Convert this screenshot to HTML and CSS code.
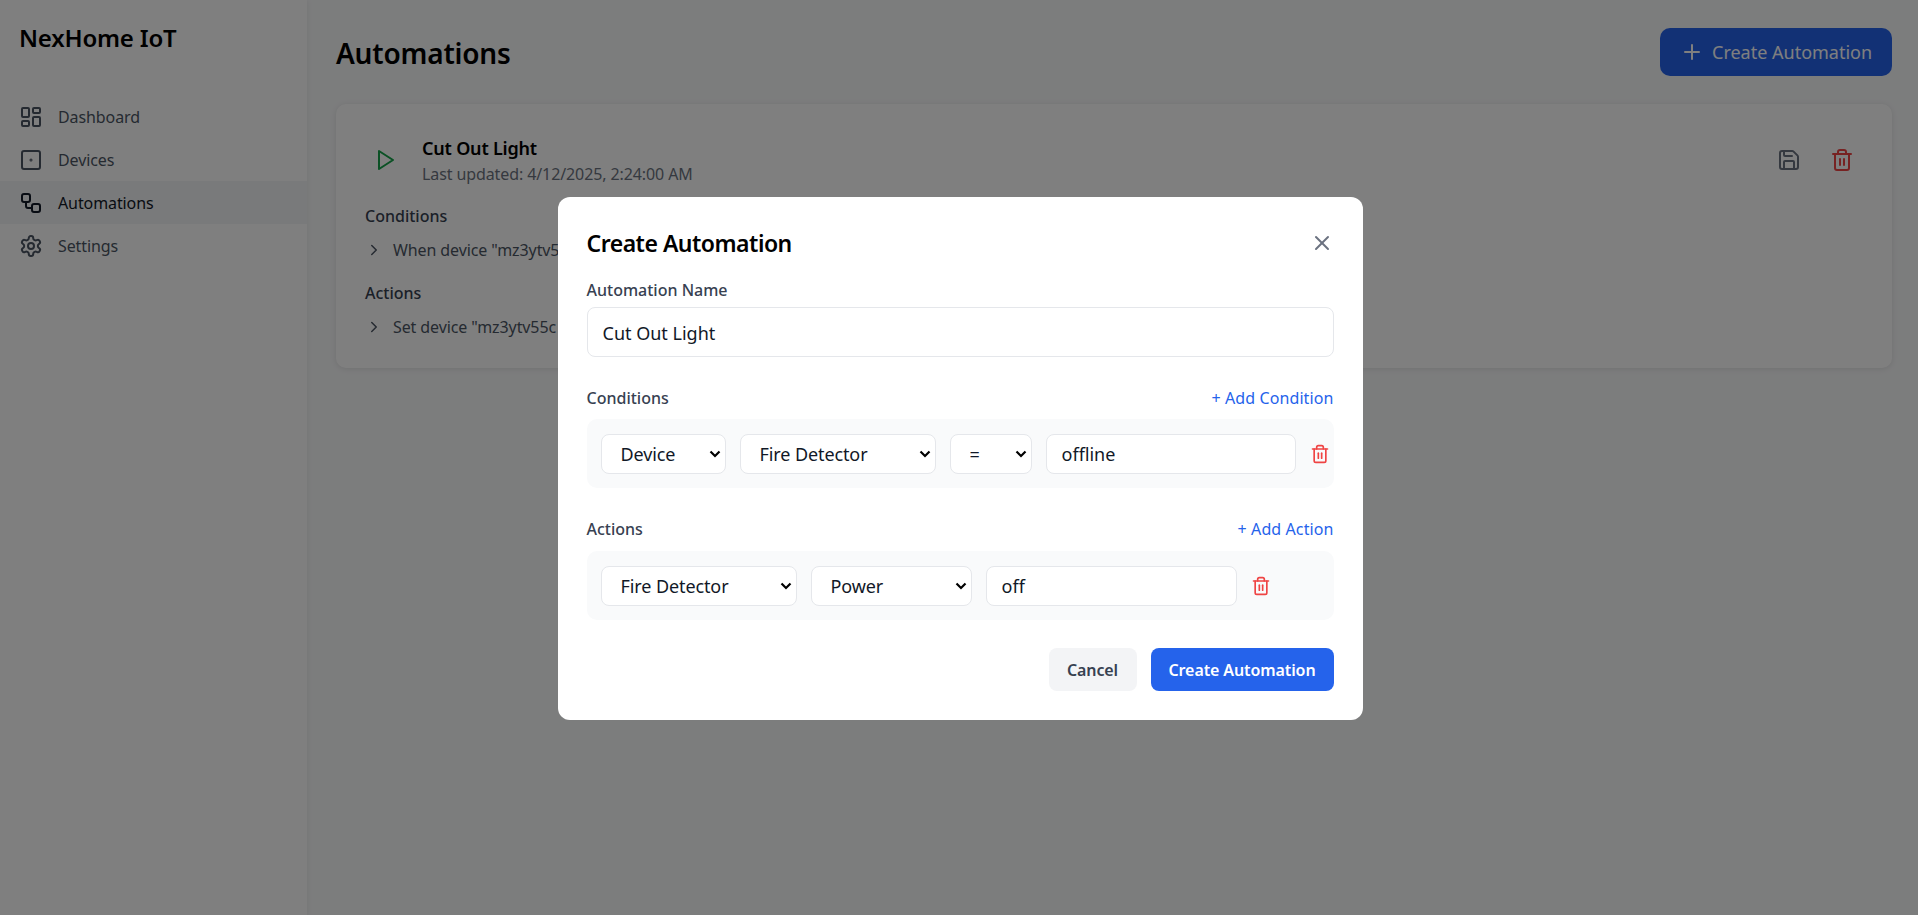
FILE: index.html
```html
<!DOCTYPE html>
<html>
<head>
  <meta charset="utf-8" />
  <title>NexHome IoT</title>
  <link rel="stylesheet" href="styles.css">
</head>
<body>
  <div class="app">
    <aside class="sidebar">
      <div class="brand">NexHome IoT</div>
      <nav class="nav">
        <a class="nav-item">
          <svg class="icon icon-24" viewBox="0 0 24 24"><rect x="3" y="3" width="7" height="9" rx="1"/><rect x="14" y="3" width="7" height="5" rx="1"/><rect x="14" y="12" width="7" height="9" rx="1"/><rect x="3" y="16" width="7" height="5" rx="1"/></svg>
          Dashboard
        </a>
        <a class="nav-item">
          <svg class="icon icon-24" viewBox="0 0 24 24"><rect x="3" y="3" width="18" height="18" rx="2"/><circle cx="12" cy="12" r="0.5"/></svg>
          Devices
        </a>
        <a class="nav-item active">
          <svg class="icon icon-24" viewBox="0 0 24 24"><rect x="3" y="3" width="8" height="8" rx="2"/><path d="M7 11v4a2 2 0 0 0 2 2h4"/><rect x="13" y="13" width="8" height="8" rx="2"/></svg>
          Automations
        </a>
        <a class="nav-item">
          <svg class="icon icon-24" viewBox="0 0 24 24"><path d="M12.22 2h-.44a2 2 0 0 0-2 2v.18a2 2 0 0 1-1 1.73l-.43.25a2 2 0 0 1-2 0l-.15-.08a2 2 0 0 0-2.73.73l-.22.38a2 2 0 0 0 .73 2.73l.15.1a2 2 0 0 1 1 1.72v.51a2 2 0 0 1-1 1.74l-.15.09a2 2 0 0 0-.73 2.73l.22.38a2 2 0 0 0 2.73.73l.15-.08a2 2 0 0 1 2 0l.43.25a2 2 0 0 1 1 1.73V20a2 2 0 0 0 2 2h.44a2 2 0 0 0 2-2v-.18a2 2 0 0 1 1-1.73l.43-.25a2 2 0 0 1 2 0l.15.08a2 2 0 0 0 2.73-.73l.22-.39a2 2 0 0 0-.73-2.73l-.15-.08a2 2 0 0 1-1-1.74v-.5a2 2 0 0 1 1-1.74l.15-.09a2 2 0 0 0 .73-2.73l-.22-.38a2 2 0 0 0-2.73-.73l-.15.08a2 2 0 0 1-2 0l-.43-.25a2 2 0 0 1-1-1.73V4a2 2 0 0 0-2-2z"/><circle cx="12" cy="12" r="3"/></svg>
          Settings
        </a>
      </nav>
    </aside>

    <main class="main">
      <header class="page-head">
        <h1>Automations</h1>
        <button class="btn-new">
          <svg class="icon icon-24" viewBox="0 0 24 24"><path d="M5 12h14"/><path d="M12 5v14"/></svg>
          Create Automation
        </button>
      </header>

      <section class="card">
        <div class="card-head">
          <svg class="icon icon-24 play" viewBox="0 0 24 24"><polygon points="5 3 19 12 5 21 5 3"/></svg>
          <div class="card-title">
            <h2>Cut Out Light</h2>
            <p>Last updated: 4/12/2025, 2:24:00 AM</p>
          </div>
          <div class="card-tools">
            <svg class="icon icon-24 save" viewBox="0 0 24 24"><path d="M15.2 3a2 2 0 0 1 1.4.6l3.8 3.8a2 2 0 0 1 .6 1.4V19a2 2 0 0 1-2 2H5a2 2 0 0 1-2-2V5a2 2 0 0 1 2-2z"/><path d="M17 21v-7a1 1 0 0 0-1-1H8a1 1 0 0 0-1 1v7"/><path d="M7 3v4a1 1 0 0 0 1 1h7"/></svg>
            <svg class="icon icon-24 trash" viewBox="0 0 24 24"><path d="M3 6h18"/><path d="M19 6v14c0 1-1 2-2 2H7c-1 0-2-1-2-2V6"/><path d="M8 6V4c0-1 1-2 2-2h4c1 0 2 1 2 2v2"/><path d="M10 11v6"/><path d="M14 11v6"/></svg>
          </div>
        </div>
        <h3>Conditions</h3>
        <div class="rule">
          <svg class="icon chevron" viewBox="0 0 24 24"><path d="m9 18 6-6-6-6"/></svg>
          When device "mz3ytv5
        </div>
        <h3>Actions</h3>
        <div class="rule">
          <svg class="icon chevron" viewBox="0 0 24 24"><path d="m9 18 6-6-6-6"/></svg>
          Set device "mz3ytv55c
        </div>
      </section>
    </main>
  </div>

  <div class="overlay">
    <div class="modal">
      <div class="modal-head">
        <h2>Create Automation</h2>
        <svg class="icon icon-24 close" viewBox="0 0 24 24"><path d="M18 6 6 18"/><path d="m6 6 12 12"/></svg>
      </div>

      <label class="field-label">Automation Name</label>
      <input class="name-input" type="text" value="Cut Out Light" />

      <div class="section-head cond-head">
        <span class="field-label">Conditions</span>
        <a class="add-link">+ Add Condition</a>
      </div>
      <div class="row-panel">
        <select class="w-125"><option>Device</option></select>
        <select class="w-196"><option>Fire Detector</option></select>
        <select class="w-81"><option>=</option></select>
        <input class="w-250" type="text" value="offline" />
        <svg class="icon" viewBox="0 0 24 24"><path d="M3 6h18"/><path d="M19 6v14c0 1-1 2-2 2H7c-1 0-2-1-2-2V6"/><path d="M8 6V4c0-1 1-2 2-2h4c1 0 2 1 2 2v2"/><path d="M10 11v6"/><path d="M14 11v6"/></svg>
      </div>

      <div class="section-head act-head">
        <span class="field-label">Actions</span>
        <a class="add-link">+ Add Action</a>
      </div>
      <div class="row-panel">
        <select class="w-196"><option>Fire Detector</option></select>
        <select class="w-161"><option>Power</option></select>
        <input class="w-251" type="text" value="off" />
        <svg class="icon" viewBox="0 0 24 24"><path d="M3 6h18"/><path d="M19 6v14c0 1-1 2-2 2H7c-1 0-2-1-2-2V6"/><path d="M8 6V4c0-1 1-2 2-2h4c1 0 2 1 2 2v2"/><path d="M10 11v6"/><path d="M14 11v6"/></svg>
      </div>

      <div class="modal-foot">
        <button class="btn-cancel">Cancel</button>
        <button class="btn-create">Create Automation</button>
      </div>
    </div>
  </div>
</body>
</html>
```

FILE: styles.css
```css
* {
  box-sizing: border-box;
}

body {
  margin: 0;
  height: 915px;
  overflow: hidden;
  font-family: "Noto Sans", "Open Sans", sans-serif;
  font-size: 16px;
  letter-spacing: -0.1px;
  color: #111827;
  background-color: #f9fafb;
}

h1, h2, h3, p {
  margin: 0;
}

.icon {
  width: 20px;
  height: 20px;
  flex: none;
  fill: none;
  stroke: currentColor;
  stroke-width: 2;
  stroke-linecap: round;
  stroke-linejoin: round;
}

.icon-24 {
  width: 24px;
  height: 24px;
}

.app {
  display: flex;
  height: 100%;
}

.sidebar {
  width: 307px;
  flex: none;
  background-color: #fff;
  box-shadow: 0 1px 6px rgba(0, 0, 0, 0.08);
}

.brand {
  padding: 22px 19px 0;
  height: 95px;
  font-size: 24px;
  line-height: 32px;
  font-weight: 600;
  letter-spacing: -0.2px;
  color: #000;
}

.nav-item {
  display: flex;
  align-items: center;
  gap: 15px;
  height: 43px;
  padding-left: 19px;
  color: #4b5563;
}

.nav-item.active {
  background-color: #f3f4f6;
  color: #111827;
}

.main {
  flex: 1;
  padding: 28px 26px 0 29px;
}

.page-head {
  display: flex;
  justify-content: space-between;
  align-items: center;
  height: 48px;
  margin-bottom: 28px;
}

.page-head h1 {
  font-size: 28px;
  line-height: 40px;
  padding-top: 2px;
  font-weight: 600;
  letter-spacing: -0.2px;
  color: #000;
}

.btn-new {
  display: flex;
  align-items: center;
  gap: 8px;
  width: 232px;
  height: 48px;
  padding: 0 19px 0 20px;
  border: 0;
  border-radius: 10px;
  background-color: #2563eb;
  color: #fff;
  font: inherit;
  font-size: 18px;
  letter-spacing: 0;
}

.card {
  height: 264px;
  padding: 32px 29px 0;
  border-radius: 10px;
  background-color: #fff;
  box-shadow: 0 1px 6px rgba(0, 0, 0, 0.1);
}

.card-head {
  display: flex;
  align-items: center;
  height: 48px;
  margin-bottom: 20px;
}

.play {
  margin-left: 9px;
  color: #16a34a;
}

.card-title {
  margin-left: 24px;
  flex: 1;
}

.card-title h2 {
  font-size: 18px;
  line-height: 26px;
  font-weight: 600;
  letter-spacing: -0.2px;
  color: #000;
}

.card-title p {
  line-height: 24px;
  padding-top: 1px;
  color: #6b7280;
}

.card-tools {
  display: flex;
  gap: 29px;
  margin-right: 9px;
}

.save {
  color: #6b7280;
}

.trash {
  color: #ef4444;
}

.card h3 {
  font-size: 16px;
  line-height: 24px;
  font-weight: 500;
  letter-spacing: 0;
  color: #374151;
}

.rule {
  display: flex;
  align-items: center;
  gap: 10px;
  height: 24px;
  margin: 10px 0 19px;
  color: #4b5563;
}

.chevron {
  width: 18px;
  height: 18px;
}

.overlay {
  position: fixed;
  top: 0;
  left: 0;
  right: 0;
  bottom: 0;
  display: flex;
  align-items: center;
  justify-content: center;
  padding: 2px 0 0 2px;
  background-color: rgba(0, 0, 0, 0.5);
}

.modal {
  width: 805px;
  height: 523px;
  padding: 29px;
  border-radius: 12px;
  background-color: #fff;
}

.modal-head {
  display: flex;
  justify-content: space-between;
  align-items: center;
  height: 34px;
  margin-bottom: 18px;
}

.modal-head h2 {
  font-size: 23px;
  font-weight: 600;
  letter-spacing: -0.5px;
  color: #000;
}

.close {
  color: #6b7280;
}

.field-label {
  display: block;
  font-size: 16px;
  line-height: 24px;
  font-weight: 500;
  letter-spacing: 0;
  color: #374151;
}

.name-input {
  display: block;
  width: 100%;
  height: 50px;
  margin-top: 5px;
  padding-top: 2px;
}

input, select {
  flex: none;
  height: 40px;
  padding: 0 15px;
  border: 1px solid #e5e7eb;
  border-radius: 8px;
  background-color: #fff;
  color: #111827;
  font-family: inherit;
  font-size: 18px;
  letter-spacing: 0;
}

select {
  appearance: none;
  padding: 0 19px;
  letter-spacing: -0.1px;
  background-image: url("data:image/svg+xml,%3Csvg xmlns='http://www.w3.org/2000/svg' width='12' height='8' viewBox='0 0 12 8'%3E%3Cpath d='M1.5 1.5 6 6l4.5-4.5' fill='none' stroke='%23000' stroke-width='2.2'/%3E%3C/svg%3E");
  background-repeat: no-repeat;
  background-position: right 4px center;
}

.section-head {
  display: flex;
  justify-content: space-between;
  align-items: center;
  height: 24px;
}

.cond-head {
  margin-top: 29px;
  margin-bottom: 9px;
}

.act-head {
  margin-top: 29px;
  margin-bottom: 10px;
}

.add-link {
  letter-spacing: 0.1px;
  color: #2563eb;
}

.row-panel {
  display: flex;
  align-items: center;
  gap: 14px;
  height: 69px;
  padding: 0 14px;
  border-radius: 10px;
  background-color: #f9fafb;
  color: #ef4444;
}

.w-81 { width: 82px; }
.w-125 { width: 125px; }
.w-161 { width: 161px; }
.w-196 { width: 196px; }
.w-250 { width: 250px; }
.w-251 { width: 251px; }

.modal-foot {
  display: flex;
  justify-content: flex-end;
  gap: 14px;
  margin-top: 28px;
}

.modal-foot button {
  height: 43px;
  border: 0;
  border-radius: 8px;
  font: inherit;
  font-weight: 600;
  letter-spacing: -0.1px;
}

.btn-cancel {
  width: 88px;
  background-color: #f3f4f6;
  color: #374151;
}

.btn-create {
  width: 183px;
  background-color: #2563eb;
  color: #fff;
}
```
